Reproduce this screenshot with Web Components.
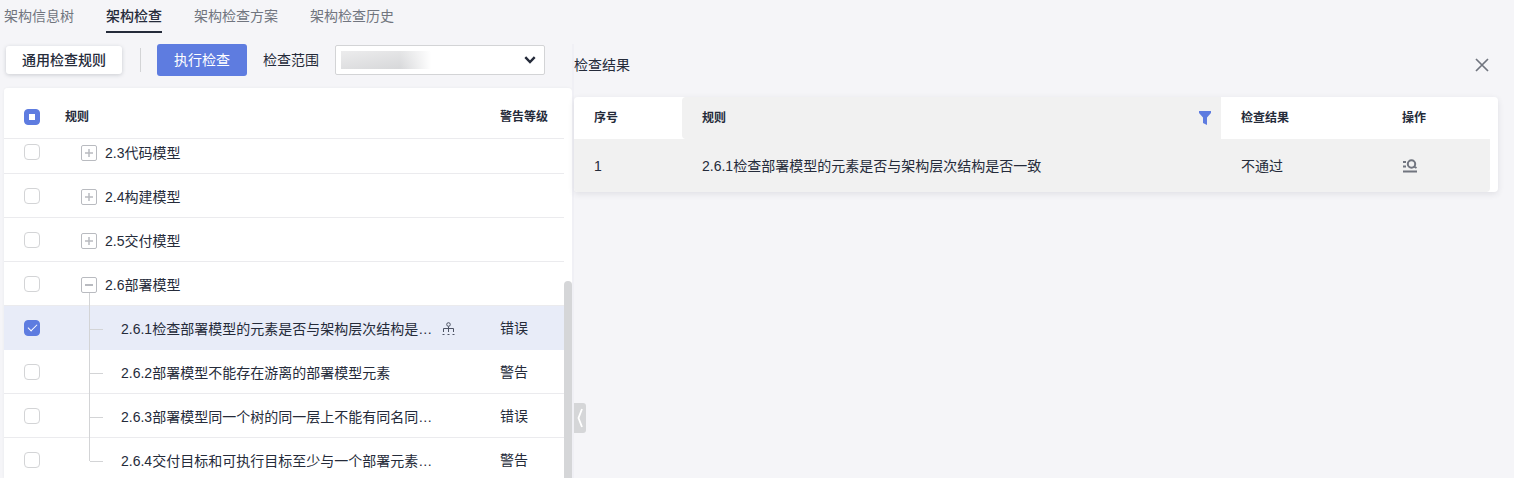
<!DOCTYPE html>
<html lang="zh-CN">
<head>
<meta charset="utf-8">
<title>架构检查</title>
<style>
    html, body {
        height: 100%;
        margin: 0;
    }

    body {
        --text: #252b3a;
        --muted: #71757f;
        --accent: #5e7ce0;
        --line: #ebebee;
        --border: #d3d4d6;
        --hover: #f1f1f1;
        --selected: #e8ecf8;
        background: #f5f5f8;
        color: var(--text);
        font: 14px/20px "Liberation Sans", "Noto Sans CJK SC", sans-serif;
    }
</style>
</head>
<body>
<check-page>
    <tab-bar slot="tabs">
        <tab-link>架构信息树</tab-link>
        <tab-link active>架构检查</tab-link>
        <tab-link>架构检查方案</tab-link>
        <tab-link>架构检查历史</tab-link>
    </tab-bar>
    <check-toolbar slot="rules">
        <ui-button slot="common">通用检查规则</ui-button>
        <ui-button slot="run" primary>执行检查</ui-button>
        <scope-select slot="scope" label="检查范围"></scope-select>
    </check-toolbar>
    <rule-table slot="rules"></rule-table>
    <result-panel slot="results" heading="检查结果">
        <result-table></result-table>
    </result-panel>
</check-page>

<script>
const ICONS = {
    close: `<svg width="14" height="14" viewBox="0 0 14 14" fill="none" stroke="#71757f" stroke-width="1.7"><path d="M1 1l12 12M13 1L1 13"/></svg>`,
    chevron: `<svg width="12" height="8" viewBox="0 0 12 8" fill="none" stroke="#252b3a" stroke-width="2.4"><path d="M1.300 1.200L6 6l4.700-4.800"/></svg>`,
    filter: `<svg width="12" height="14" viewBox="0 0 12 14" fill="#5e7ce0"><path d="M0 0h12v2L8 6.500V14l-4-2V6.500L0 2z"/></svg>`,
    plus: `<svg width="16" height="16" viewBox="0 0 16 16" fill="none" stroke="#b9bbc0"><rect x=".5" y=".5" width="15" height="15" rx="1.500"/><path stroke-width="1.500" d="M4 8h8M8 4v8"/></svg>`,
    minus: `<svg width="16" height="16" viewBox="0 0 16 16" fill="none" stroke="#b9bbc0"><rect x=".5" y=".5" width="15" height="15" rx="1.500"/><path stroke-width="2" d="M4 8h8"/></svg>`,
    tree: `<svg width="14" height="14" viewBox="0 0 14 14" fill="none" stroke="#4d5364"><circle cx="6.500" cy="2.500" r="1.800"/><path d="M6.500 4.500V10M1.500 10V6.500h10V10M.5 12.500h2M5.500 12.500h2M10.500 12.500h2"/></svg>`,
    detail: `<svg width="16" height="14" viewBox="0 0 16 14" fill="none" stroke="#71757f" stroke-width="2"><circle cx="9.500" cy="5" r="3.700"/><path d="M12 7.500l2.500 1.500M1 3h3M1 7.500h3M1 12.500h14"/></svg>`,
    handle: `<svg width="6" height="20" viewBox="0 0 6 20" fill="none" stroke="#fff" stroke-width="1.800"><path d="M5 1L1.500 10 5 19"/></svg>`,
};

// shared by both tables, because page rules stop at the shadow root
const TABLE_STYLE = `
    table {
        width: 100%;
        table-layout: fixed;
        border-collapse: separate;
        border-spacing: 0;
    }

    th, td {
        box-sizing: border-box;
        padding: 0 0 0 20px;
        text-align: left;
        font-weight: normal;
    }

    th {
        font-size: 12px;
        font-weight: bold;
    }

    svg {
        display: block;
    }
`;

class TabLink extends HTMLElement {
    constructor() {
        super();
        this.attachShadow({ mode: "open" }).innerHTML = `
        <style>
        :host {
            display: block;
        }

        a {
            display: block;
            padding: 6px 0 5px;
            border-bottom: 2px solid transparent;
            color: var(--muted);
            text-decoration: none;
        }

        :host([active]) a {
            border-color: var(--text);
            color: var(--text);
            font-weight: 500;
        }
        </style>
        <a href="#"><slot></slot></a>
        `;
    }
}

class TabBar extends HTMLElement {
    constructor() {
        super();
        this.attachShadow({ mode: "open" }).innerHTML = `
        <style>
        :host {
            display: block;
        }

        nav {
            display: flex;
            gap: 32px;
            padding-left: 4px;
        }
        </style>
        <nav><slot></slot></nav>
        `;
    }
}

class UiButton extends HTMLElement {
    constructor() {
        super();
        this.attachShadow({ mode: "open" }).innerHTML = `
        <style>
        :host {
            display: block;
        }

        button {
            display: block;
            height: 28px;
            padding: 0 16px;
            border: 0;
            border-radius: 3px;
            background: #fff;
            box-shadow: 0 1px 4px rgba(37, 43, 58, 0.2);
            color: var(--text);
            font: inherit;
            font-weight: 500;
            cursor: pointer;
        }

        :host([primary]) button {
            height: 32px;
            padding: 0 17px;
            background: var(--accent);
            box-shadow: none;
            color: #fff;
            font-weight: normal;
        }
        </style>
        <button type="button"><slot></slot></button>
        `;
    }
}

class ScopeSelect extends HTMLElement {
    connectedCallback() {
        const root = this.attachShadow({ mode: "open" });
        root.innerHTML = `
        <style>
        :host {
            display: flex;
            align-items: center;
            gap: 16px;
        }

        .field {
            display: grid;
            flex: 1;
            align-items: center;
        }

        .field > * {
            grid-area: 1 / 1;
        }

        /* the current value is kept unreadable */
        select {
            width: 100%;
            height: 30px;
            appearance: none;
            border: 1px solid var(--border);
            border-radius: 2px;
            background:
                linear-gradient(90deg, transparent 65%, #fff),
                linear-gradient(170deg, #ececed, #d3d4d6),
                #fff;
            background-position: 5px 5px;
            background-size: 90px 18px;
            background-repeat: no-repeat;
        }

        svg {
            justify-self: end;
            margin-right: 9px;
            pointer-events: none;
        }
        </style>
        <label for="scope">${this.getAttribute("label")}</label>
        <div class="field">
            <select id="scope"><option></option></select>
            ${ICONS.chevron}
        </div>
        `;
    }
}

class CheckToolbar extends HTMLElement {
    constructor() {
        super();
        this.attachShadow({ mode: "open" }).innerHTML = `
        <style>
        :host {
            display: flex;
            align-items: center;
            gap: 16px;
            padding: 0 27px 0 6px;
        }

        .divider {
            width: 1px;
            height: 24px;
            margin-left: 2px;
            background: var(--border);
        }

        slot[name="scope"]::slotted(*) {
            flex: 1;
        }
        </style>
        <slot name="common"></slot>
        <span class="divider"></span>
        <slot name="run"></slot>
        <slot name="scope"></slot>
        `;
    }
}

class RuleTable extends HTMLElement {
    rules = [
        { name: "2.3代码模型", icon: "plus" },
        { name: "2.4构建模型", icon: "plus" },
        { name: "2.5交付模型", icon: "plus" },
        { name: "2.6部署模型", icon: "minus" },
        { name: "2.6.1检查部署模型的元素是否与架构层次结构是…", level: "错误", checked: true },
        { name: "2.6.2部署模型不能存在游离的部署模型元素", level: "警告" },
        { name: "2.6.3部署模型同一个树的同一层上不能有同名同…", level: "错误" },
        { name: "2.6.4交付目标和可执行目标至少与一个部署元素…", level: "警告", last: true },
    ];

    connectedCallback() {
        const root = this.attachShadow({ mode: "open" });
        root.innerHTML = `
        <style>
        ${TABLE_STYLE}
        :host {
            display: flex;
            min-height: 0;
            margin-left: 4px;
            border-radius: 4px 4px 0 0;
            background: #fff;
            box-shadow: 0 0 3px rgba(37, 43, 58, 0.06);
            overflow: hidden;
        }

        .scroll {
            flex: 1;
            overflow: auto;
            scrollbar-width: none;
        }

        .track {
            display: flex;
            width: 8px;
            padding-top: 193px;
        }

        .thumb {
            flex: 1;
            border-radius: 4px 4px 0 0;
            background: #d5d6d8;
        }

        th {
            position: sticky;
            top: 0;
            z-index: 1;
            height: 51px;
            padding-top: 7px;
            border-bottom: 1px solid var(--line);
            background: #fff;
        }

        td {
            height: 44px;
            border-bottom: 1px solid var(--line);
        }

        tr.checked td {
            border-color: var(--selected);
            background: var(--selected);
        }

        .pick {
            width: 41px;
        }

        .level {
            width: 84px;
        }

        input {
            display: grid;
            place-items: center;
            width: 16px;
            height: 16px;
            margin: 0;
            appearance: none;
            border: 1px solid var(--border);
            border-radius: 4px;
            background: #fff;
        }

        input:checked, input:indeterminate {
            border-color: var(--accent);
            background: var(--accent);
        }

        input:indeterminate::after {
            content: "";
            width: 6px;
            height: 6px;
            background: #fff;
        }

        input:checked::after {
            content: "";
            box-sizing: border-box;
            width: 9px;
            height: 5px;
            margin-bottom: 3px;
            border: solid #fff;
            border-width: 0 0 1px 1px;
            transform: rotate(-45deg);
        }

        .node {
            position: relative;
            display: flex;
            align-items: center;
            gap: 8px;
            height: 41px;
            padding: 2px 24px 0 16px;
        }

        .node button {
            padding: 0;
            border: 0;
            background: none;
        }

        .name {
            flex: 1;
            white-space: nowrap;
        }

        .extra {
            width: 14px;
        }

        .node.child {
            padding-left: 56px;
        }

        /* guide lines running from the open node to each child */
        .child::before {
            content: "";
            position: absolute;
            top: 0;
            left: 24px;
            height: 44px;
            border-left: 1px solid var(--border);
        }

        .child.last::before {
            height: 23px;
        }

        .child::after {
            content: "";
            position: absolute;
            top: 23px;
            left: 25px;
            width: 13px;
            border-top: 1px solid var(--border);
        }

        .open::before {
            content: "";
            position: absolute;
            top: 31px;
            left: 24px;
            height: 13px;
            border-left: 1px solid var(--border);
        }
        </style>
        <div class="scroll">
            <table>
                <thead>
                    <tr>
                        <th class="pick"><input type="checkbox" id="all" aria-label="全选"></th>
                        <th>规则</th>
                        <th class="level">警告等级</th>
                    </tr>
                </thead>
                <tbody>${this.rules.map((rule) => this.row(rule)).join("")}</tbody>
            </table>
        </div>
        <div class="track"><div class="thumb"></div></div>
        `;

        root.getElementById("all").indeterminate = true;
        root.querySelector(".scroll").scrollTop = 9;
    }

    row(rule) {
        const kind = rule.icon ? (rule.icon === "minus" ? "open" : "") : `child ${rule.last ? "last" : ""}`;
        return `
        <tr class="${rule.checked ? "checked" : ""}">
            <td><input type="checkbox" aria-label="${rule.name}" ${rule.checked ? "checked" : ""}></td>
            <td>
                <div class="node ${kind}">
                    ${rule.icon ? `<button type="button" aria-label="展开或收起">${ICONS[rule.icon]}</button>` : ""}
                    <span class="name">${rule.name}</span>
                    <span class="extra">${rule.checked ? ICONS.tree : ""}</span>
                </div>
            </td>
            <td>${rule.level ?? ""}</td>
        </tr>`;
    }
}

class ResultTable extends HTMLElement {
    constructor() {
        super();
        this.attachShadow({ mode: "open" }).innerHTML = `
        <style>
        ${TABLE_STYLE}
        :host {
            display: block;
            padding-right: 8px;
            border-radius: 4px;
            background: #fff;
            box-shadow: 0 2px 6px rgba(37, 43, 58, 0.1);
        }

        th {
            height: 42px;
        }

        td {
            height: 53px;
            background: var(--hover);
        }

        td:first-child {
            border-radius: 0 0 0 4px;
        }

        td:last-child {
            border-radius: 0 0 4px 0;
        }

        .no, .action {
            width: 108px;
        }

        .result {
            width: 161px;
        }

        .rule {
            border-radius: 4px 0 0 4px;
            background: var(--hover);
        }

        .rule div {
            display: flex;
            align-items: center;
            justify-content: space-between;
            padding-right: 10px;
        }

        button {
            display: block;
            padding: 0;
            border: 0;
            background: none;
        }
        </style>
        <table>
            <thead>
                <tr>
                    <th class="no">序号</th>
                    <th class="rule"><div>规则 <button type="button" aria-label="筛选">${ICONS.filter}</button></div></th>
                    <th class="result">检查结果</th>
                    <th class="action">操作</th>
                </tr>
            </thead>
            <tbody>
                <tr>
                    <td>1</td>
                    <td>2.6.1检查部署模型的元素是否与架构层次结构是否一致</td>
                    <td>不通过</td>
                    <td><button type="button" aria-label="查看">${ICONS.detail}</button></td>
                </tr>
            </tbody>
        </table>
        `;
    }
}

class ResultPanel extends HTMLElement {
    connectedCallback() {
        this.attachShadow({ mode: "open" }).innerHTML = `
        <style>
        :host {
            position: relative;
            display: block;
            padding-right: 16px;
            border-left: 2px solid #f0f0f5;
        }

        header {
            display: flex;
            align-items: center;
            justify-content: space-between;
            height: 41px;
            padding: 0 9px 12px 0;
        }

        h2 {
            margin: 0;
            font: inherit;
        }

        button {
            display: grid;
            place-items: center;
            padding: 0;
            border: 0;
            background: none;
            cursor: pointer;
        }

        .handle {
            position: absolute;
            bottom: 45px;
            left: 0;
            width: 12px;
            height: 30px;
            border-radius: 0 3px 3px 0;
            background: #d5d6d8;
        }
        </style>
        <header>
            <h2>${this.getAttribute("heading")}</h2>
            <button type="button" aria-label="关闭">${ICONS.close}</button>
        </header>
        <slot></slot>
        <button class="handle" type="button" aria-label="收起">${ICONS.handle}</button>
        `;
    }
}

class CheckPage extends HTMLElement {
    constructor() {
        super();
        this.attachShadow({ mode: "open" }).innerHTML = `
        <style>
        :host {
            display: flex;
            flex-direction: column;
            height: 100vh;
            overflow: hidden;
        }

        main {
            display: grid;
            flex: 1;
            grid-template-columns: 572fr 942fr;
            grid-template-rows: minmax(0, 1fr);
            min-height: 0;
            padding-top: 11px;
        }

        .left {
            display: flex;
            flex-direction: column;
            gap: 12px;
            min-width: 0;
        }
        </style>
        <slot name="tabs"></slot>
        <main>
            <div class="left"><slot name="rules"></slot></div>
            <slot name="results"></slot>
        </main>
        `;
    }
}

customElements.define('tab-link', TabLink);
customElements.define('tab-bar', TabBar);
customElements.define('ui-button', UiButton);
customElements.define('scope-select', ScopeSelect);
customElements.define('check-toolbar', CheckToolbar);
customElements.define('check-page', CheckPage);
customElements.define('rule-table', RuleTable);
customElements.define('result-table', ResultTable);
customElements.define('result-panel', ResultPanel);
</script>
</body>
</html>
